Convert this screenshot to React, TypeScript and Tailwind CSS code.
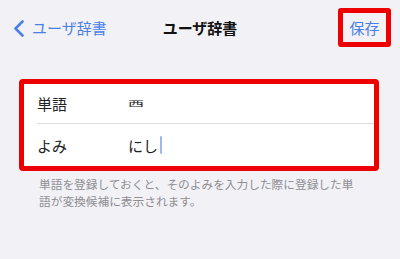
export default function App() {
  const jp = { fontFamily: '"Noto Sans CJK JP", "Noto Sans", sans-serif' }

  return (
    <div className="w-[400px] h-[259px] bg-[#f1f1f6] overflow-hidden" style={jp}>
      {/* Nav bar */}
      <div className="grid grid-cols-[1fr_auto_1fr] items-center h-[54px]">
        <div className="flex items-center pl-[13px] text-[#4a80e6]">
          <svg width="12" height="17" viewBox="0 0 12 17" fill="none" className="mt-[2px]">
            <path d="M9.5 1.5 L2.5 8.5 L9.5 15.5" stroke="currentColor" strokeWidth="2.6" strokeLinecap="round" strokeLinejoin="round" />
          </svg>
          <span className="ml-[7px] text-[15px] leading-none">ユーザ辞書</span>
        </div>
        <div className="text-[15px] font-bold text-[#111] leading-none">ユーザ辞書</div>
        <div className="flex justify-end pr-[9px]">
          <div className="w-[53px] h-[39px] border-[5px] border-[#ee0000] rounded-[3px] flex items-center justify-center text-[15px] text-[#4a80e6] leading-none">
            保存
          </div>
        </div>
      </div>

      {/* Form card */}
      <div className="mt-[25px] mx-[19px] w-[360px] border-[5px] border-[#ee0000] rounded-[4px] bg-white">
        <div className="pl-[13px]">
          <div className="flex items-center h-[40px] border-b border-[#dcdce0]">
            <span className="w-[91px] text-[15px] text-[#222] leading-none">単語</span>
            <span className="inline-block text-[16px] text-[#222] leading-none [transform:translateY(-1px)_scaleY(0.45)]">西</span>
          </div>
          <div className="flex items-center h-[42px]">
            <span className="w-[91px] text-[15px] text-[#222] leading-none">よみ</span>
            <span className="text-[15px] text-[#222] leading-none">にし</span>
            <span className="ml-[2px] w-[2px] h-[18px] bg-[#9db6ee] rounded-full" />
          </div>
        </div>
      </div>

      {/* Footer */}
      <p className="mt-[4px] ml-[39px] w-[322px] text-[11.7px] leading-[17px] text-[#8e8e93]">
        単語を登録しておくと、そのよみを入力した際に登録した単語が変換候補に表示されます。
      </p>
    </div>
  )
}
